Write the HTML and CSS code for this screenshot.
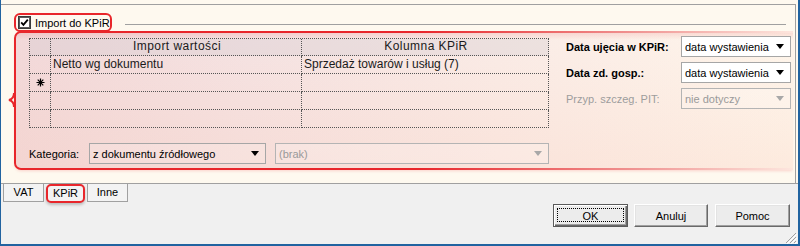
FILE: index.html
```html
<!DOCTYPE html>
<html lang="pl">
<head>
  <meta charset="UTF-8" />
  <meta name="viewport" content="width=device-width, initial-scale=1.0"/>
  <title>Import do KPiR</title>
  <link rel="stylesheet" href="styles.css">
</head>
<body>

<div class="window">
  <div class="page">
    <div class="page-inner">

      <div class="group-head">
        <label class="check-title">
          <svg class="checkbox" width="13" height="13" viewBox="0 0 13 13">
            <rect x="0.5" y="0.5" width="12" height="12" fill="#fff" stroke="#3a3a3a"/>
            <rect x="1.5" y="1.5" width="10" height="10" fill="none" stroke="#5a5a5a"/>
            <path d="M3.2 6.4 L5.4 8.8 L9.8 3.6" fill="none" stroke="#000" stroke-width="1.8"/>
          </svg>
          <span>Import do KPiR</span>
        </label>
        <div class="group-line"></div>
      </div>

      <div class="kpir-box">
        <svg class="brace" width="8" height="14" viewBox="0 0 8 14">
          <path d="M7 0 C7 4 6 6 2 7 C6 8 7 10 7 14" fill="none" stroke="#e8262b" stroke-width="2"/>
        </svg>

        <div class="left-col">
          <div class="grid">
            <div class="cell head"></div>
            <div class="cell head center">Import wartości</div>
            <div class="cell head center">Kolumna KPiR</div>

            <div class="cell"></div>
            <div class="cell">Netto wg dokumentu</div>
            <div class="cell">Sprzedaż towarów i usług (7)</div>

            <div class="cell marker">
              <svg width="9" height="9" viewBox="0 0 9 9">
                <path d="M4.5 0.5 V8.5 M0.5 4.5 H8.5 M1.7 1.7 L7.3 7.3 M7.3 1.7 L1.7 7.3" stroke="#000" stroke-width="1.2"/>
              </svg>
            </div>
            <div class="cell"></div>
            <div class="cell"></div>

            <div class="cell"></div>
            <div class="cell"></div>
            <div class="cell"></div>

            <div class="cell"></div>
            <div class="cell"></div>
            <div class="cell"></div>
          </div>

          <div class="category">
            <span class="cat-label">Kategoria:</span>
            <div class="combo tinted cat-main">z dokumentu źródłowego<span class="arrow"></span></div>
            <div class="combo tinted disabled cat-sub">(brak)<span class="arrow"></span></div>
          </div>
        </div>

        <div class="right-col">
          <span class="label bold">Data ujęcia w KPiR:</span>
          <div class="combo">data wystawienia<span class="arrow"></span></div>

          <span class="label bold">Data zd. gosp.:</span>
          <div class="combo">data wystawienia<span class="arrow"></span></div>

          <span class="label muted">Przyp. szczeg. PIT:</span>
          <div class="combo disabled">nie dotyczy<span class="arrow"></span></div>
        </div>
      </div>

    </div>
  </div>

  <div class="bottom">
    <div class="tabs">
      <div class="tab">VAT</div>
      <div class="tab active">KPiR</div>
      <div class="tab">Inne</div>
    </div>

    <div class="buttons">
      <button class="btn default">OK</button>
      <button class="btn cancel">Anuluj</button>
      <button class="btn help">Pomoc</button>
    </div>

    <div class="grip-row">
      <svg width="12" height="12" viewBox="0 0 12 12">
        <path d="M11 1 L1 11 M11 5 L5 11 M11 9 L9 11" stroke="#a0a0a0" stroke-width="1"/>
        <path d="M12 2 L2 12 M12 6 L6 12 M12 10 L10 12" stroke="#fff" stroke-width="1"/>
      </svg>
    </div>
  </div>
</div>

</body>
</html>
```

FILE: styles.css
```css
body {
  margin: 0;
  font-family: 'Liberation Sans', Arial, sans-serif;
  font-size: 11px;
  color: #000;
  background: #f0f0f0;
}
.window {
  width: 800px;
  height: 246px;
  box-sizing: border-box;
  border-left: 1px solid #2163a0;
  border-right: 2px solid #2163a0;
  border-bottom: 2px solid #2163a0;
  background: #f0f0f0;
}
.page {
  height: 184px;
  box-sizing: border-box;
  padding: 4px 2px 0 0;
  background: #fef9ef;
  border-bottom: 1px solid #a0a0a0;
}
.page-inner {
  height: 179px;
  box-sizing: border-box;
  border-top: 1px solid #a0a0a0;
  border-right: 1px solid #a0a0a0;
}

/* group header with checkbox */
.group-head {
  display: flex;
  margin: 8px 0 0 13px;
  height: 19px;
}
.check-title {
  display: flex;
  align-items: center;
  gap: 4px;
  width: 98px;
  height: 19px;
  box-sizing: border-box;
  padding-left: 2px;
  border: 2px solid #e8262b;
  border-radius: 6px;
  white-space: nowrap;
  position: relative;
  z-index: 1;
}
.checkbox {
  display: block;
  flex: none;
}
.group-line {
  flex: 1;
  align-self: flex-start;
  margin: 11px 9px 0 13px;
  border-top: 1px solid #a0a0a0;
}

/* highlighted KPiR block */
.kpir-box {
  position: relative;
  display: flex;
  height: 139px;
  box-sizing: border-box;
  margin: -1px 2px 0 13px;
  border: 2px solid transparent;
  border-right: 0;
  border-radius: 7px 0 0 7px;
  background:
    linear-gradient(to bottom, rgba(232, 90, 90, 0.16), rgba(232, 90, 90, 0) 7px) padding-box,
    linear-gradient(to bottom, rgba(250, 210, 190, 0), rgba(250, 200, 180, 0.25)) padding-box,
    linear-gradient(to right, #f2d9da 0%, #f5e3e3 30%, #faece7 62%, #fef6ec 100%) padding-box,
    linear-gradient(to right, #e8262b 0%, #e8262b 52%, #f09593 80%, #fde6de 100%) border-box;
  box-shadow: 0 2px 3px -1px rgba(232, 38, 43, 0.18);
}
.brace {
  position: absolute;
  left: -9px;
  top: 60px;
}
.left-col {
  width: 533px;
  padding: 5px 0 0 13px;
  box-sizing: border-box;
}
.grid {
  display: grid;
  grid-template-columns: 21px 251px 247px;
  grid-template-rows: 17px 18px 18px 18px 18px;
  border-top: 1px dotted #555;
  border-left: 1px dotted #555;
  font-size: 12px;
  color: #1a1a1a;
}
.cell {
  border-right: 1px dotted #555;
  border-bottom: 1px dotted #555;
  padding-left: 2px;
  line-height: 16px;
  white-space: nowrap;
}
.cell.head {
  background: rgba(205, 200, 205, 0.3);
  line-height: 15px;
}
.cell.center {
  text-align: center;
  letter-spacing: 0.45px;
}
.cell.marker {
  display: flex;
  align-items: center;
  justify-content: center;
  padding: 0;
}

.category {
  display: flex;
  align-items: center;
  margin-top: 15px;
}
.cat-label {
  width: 60px;
}
.cat-main {
  width: 177px;
}
.cat-sub {
  width: 274px;
  margin-left: 9px;
}

.right-col {
  display: grid;
  grid-template-columns: 115px 110px;
  grid-auto-rows: 21px;
  row-gap: 5px;
  align-items: center;
  margin-left: 17px;
  padding-top: 3px;
}
.label {
  white-space: nowrap;
}
.label.bold {
  font-weight: bold;
}
.label.muted {
  color: #9d9d9d;
}

/* combo boxes */
.combo {
  display: flex;
  align-items: center;
  height: 21px;
  box-sizing: border-box;
  padding-left: 3px;
  border: 1px solid #a6a6a6;
  background: #fff;
  white-space: nowrap;
}
.combo.tinted {
  background: rgba(255, 255, 255, 0.15);
}
.combo .arrow {
  margin-left: auto;
  margin-right: 6px;
  width: 0;
  height: 0;
  border-left: 4.5px solid transparent;
  border-right: 4.5px solid transparent;
  border-top: 5px solid #000;
}
.combo.disabled {
  color: #9a9a9a;
  border-color: #b4b4b4;
  background: rgba(255, 255, 255, 0.2);
}
.combo.disabled .arrow {
  border-top-color: #a8a8a8;
}

/* bottom part: tabs and buttons */
.tabs {
  display: flex;
  align-items: flex-start;
  gap: 2px;
  height: 18px;
  padding-left: 2px;
}
.tab {
  width: 41px;
  height: 18px;
  box-sizing: border-box;
  border: 1px solid #a0a0a0;
  border-top: 0;
  background: #f3f3f3;
  text-align: center;
  line-height: 16px;
}
.tab.active {
  width: 39px;
  height: 19px;
  border: 2px solid #e8262b;
  border-radius: 5px;
  line-height: 14px;
  box-shadow: 0 2px 3px rgba(0, 0, 0, 0.22);
}

.buttons {
  display: flex;
  justify-content: flex-end;
  margin-top: 2px;
  padding-right: 8px;
}
.btn {
  position: relative;
  width: 75px;
  height: 23px;
  box-sizing: border-box;
  padding: 0;
  font-family: inherit;
  font-size: 11px;
  color: #000;
  background: #ececec;
  border: 1px solid;
  border-color: #fff #696969 #696969 #fff;
  box-shadow: inset -1px -1px #a0a0a0, inset 1px 1px #e3e3e3;
}
.btn.cancel {
  width: 74px;
  margin-left: 6px;
}
.btn.help {
  margin-left: 7px;
}
.btn.default {
  border: 1px solid #5a5a5a;
  box-shadow: inset 1px 1px #fff, inset -1px -1px #696969, inset -2px -2px #a0a0a0;
}
.btn.default::after {
  content: '';
  position: absolute;
  left: 3px;
  top: 3px;
  right: 3px;
  bottom: 4px;
  border: 1px dotted #000;
}

.grip-row {
  display: flex;
  justify-content: flex-end;
  margin-top: 5px;
  padding-right: 1px;
}
.grip-row svg {
  display: block;
}
```
